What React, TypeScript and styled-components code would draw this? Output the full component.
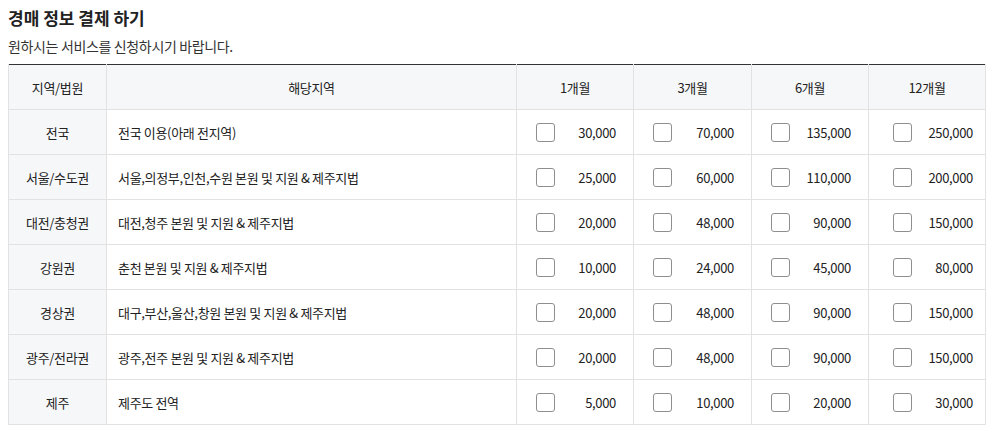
import React from "react";
import styled, {createGlobalStyle} from "styled-components";

const GlobalStyle = createGlobalStyle`
    body {
        margin: 0;
        background: #fff;
        font-family: "Noto Sans CJK KR", "Noto Sans", sans-serif;
        color: #333;
    }
`;

const rows = [
    {region: "전국", area: "전국 이용(아래 전지역)", prices: ["30,000", "70,000", "135,000", "250,000"]},
    {region: "서울/수도권", area: "서울,의정부,인천,수원 본원 및 지원 & 제주지법", prices: ["25,000", "60,000", "110,000", "200,000"]},
    {region: "대전/충청권", area: "대전,청주 본원 및 지원 & 제주지법", prices: ["20,000", "48,000", "90,000", "150,000"]},
    {region: "강원권", area: "춘천 본원 및 지원 & 제주지법", prices: ["10,000", "24,000", "45,000", "80,000"]},
    {region: "경상권", area: "대구,부산,울산,창원 본원 및 지원 & 제주지법", prices: ["20,000", "48,000", "90,000", "150,000"]},
    {region: "광주/전라권", area: "광주,전주 본원 및 지원 & 제주지법", prices: ["20,000", "48,000", "90,000", "150,000"]},
    {region: "제주", area: "제주도 전역", prices: ["5,000", "10,000", "20,000", "30,000"]},
];

const periods = ["1개월", "3개월", "6개월", "12개월"];

const App = () => {
    return (
        <Page>
            <GlobalStyle />
            <Title>경매 정보 결제 하기</Title>
            <Desc>원하시는 서비스를 신청하시기 바랍니다.</Desc>
            <Table>
                <colgroup>
                    <col style={{width: 98}} />
                    <col style={{width: 410}} />
                    <col style={{width: 117}} />
                    <col style={{width: 118}} />
                    <col style={{width: 117}} />
                    <col style={{width: 117}} />
                </colgroup>
                <thead>
                    <tr>
                        <Th>지역/법원</Th>
                        <Th>해당지역</Th>
                        {periods.map((p) => (
                            <Th key={p}>{p}</Th>
                        ))}
                    </tr>
                </thead>
                <tbody>
                    {rows.map((row) => (
                        <tr key={row.region}>
                            <RegionCell>{row.region}</RegionCell>
                            <AreaCell>{row.area}</AreaCell>
                            {row.prices.map((price, i) => (
                                <PriceCell key={i} $last={i === row.prices.length - 1}>
                                    <PriceBox>
                                        <Check type="checkbox" />
                                        <Amount>{price}</Amount>
                                    </PriceBox>
                                </PriceCell>
                            ))}
                        </tr>
                    ))}
                </tbody>
            </Table>
        </Page>
    );
};
export default App;

const Page = styled.div`
    width: 977px;
    padding: 7px 8px 0;
`;

const Title = styled.h2`
    margin: 0;
    font-size: 17px;
    font-weight: 700;
    line-height: 22px;
    color: #222;
`;

const Desc = styled.p`
    margin: 7px 0 0;
    font-size: 14px;
    letter-spacing: -0.35px;
    line-height: 20px;
    color: #333;
`;

const Table = styled.table`
    margin-top: 8px;
    width: 977px;
    table-layout: fixed;
    border-collapse: collapse;
    border-top: 1px solid #333;
    font-size: 13px;
    letter-spacing: -0.33px;
`;

const Th = styled.th`
    height: 44px;
    padding: 0;
    background: #f6f7f9;
    border: 1px solid #e2e2e2;
    border-top: none;
    font-weight: 400;
    color: #222;
    text-align: center;
`;

const Td = styled.td`
    height: 44px;
    padding: 0;
    border: 1px solid #e2e2e2;
    color: #222;
`;

const RegionCell = styled(Td)`
    background: #f6f7f9;
    text-align: center;
`;

const AreaCell = styled(Td)`
    padding-left: 11px;
`;

const PriceCell = styled(Td)<{$last?: boolean}>`
    padding: ${({$last}) => ($last ? "0 12px 0 24px" : "0 17px 0 19px")};
`;

const PriceBox = styled.label`
    display: flex;
    align-items: center;
    justify-content: space-between;
`;

const Check = styled.input`
    appearance: none;
    margin: 0;
    width: 19px;
    height: 19px;
    border: 1px solid #8e8e8e;
    border-radius: 3px;
    background: #fff;
`;

const Amount = styled.span`
    color: #222;
`;
